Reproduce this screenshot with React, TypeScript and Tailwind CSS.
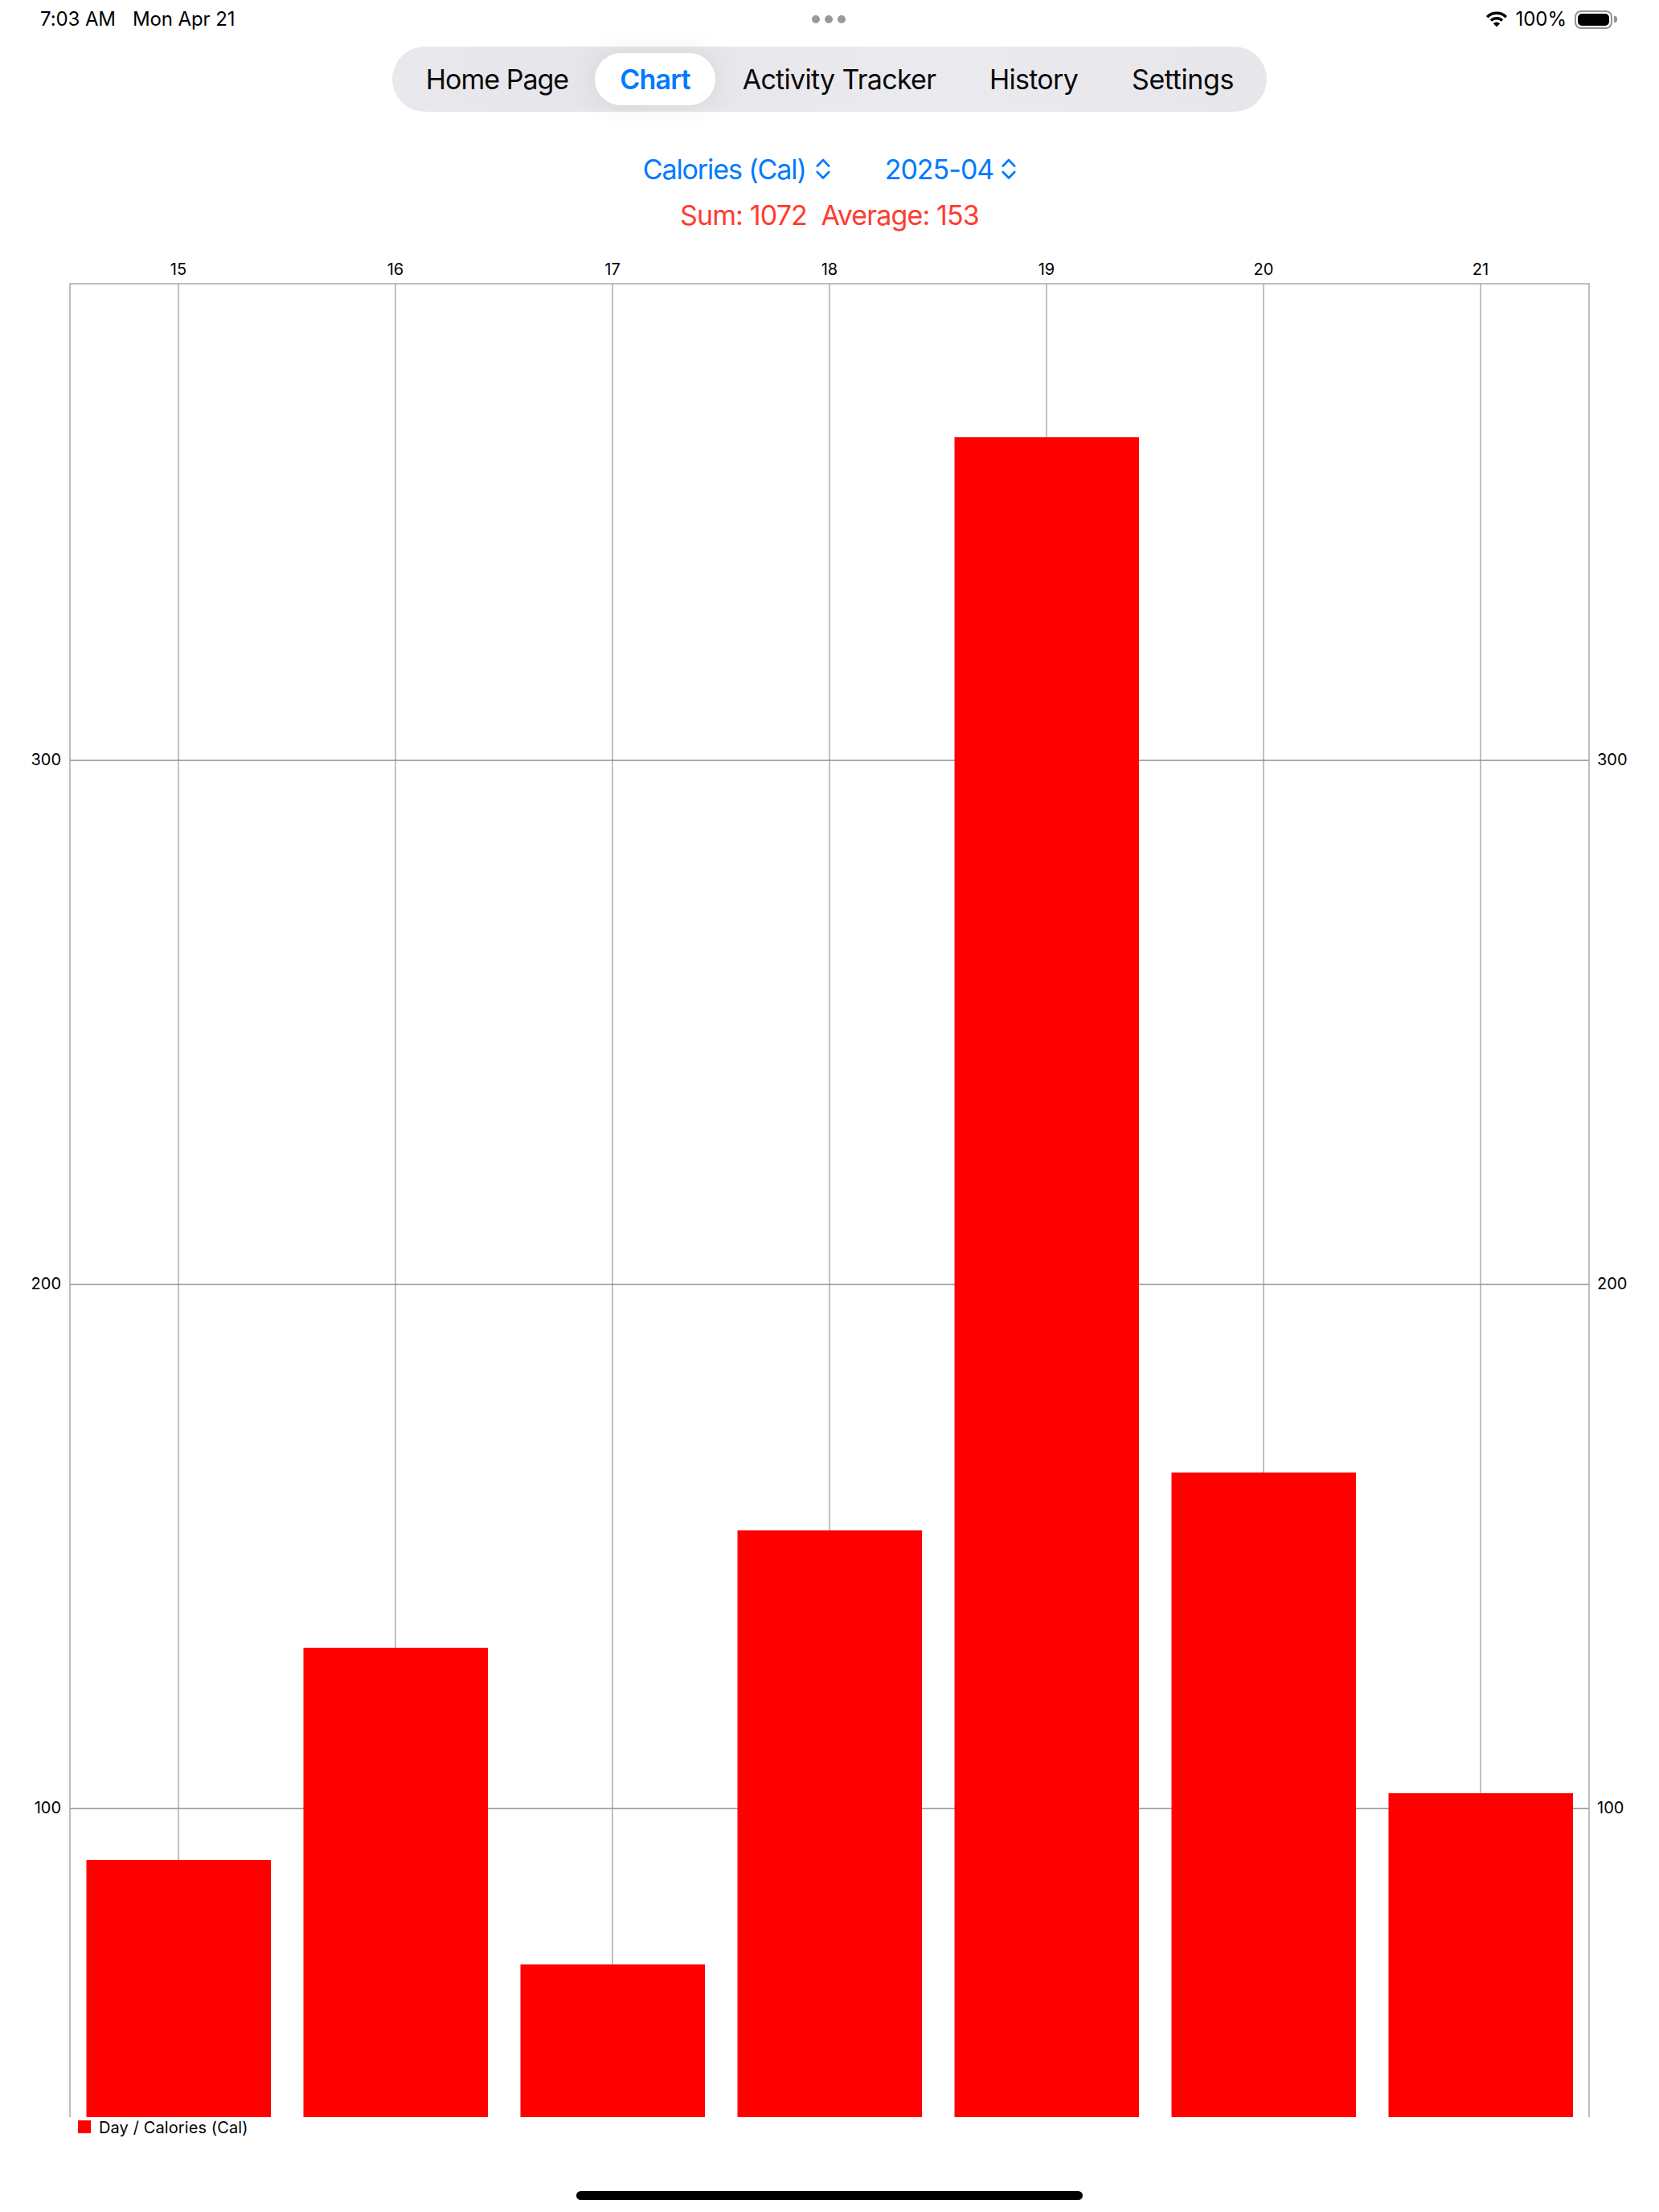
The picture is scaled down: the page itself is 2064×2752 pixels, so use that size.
import React from "react";

const bars = [
  { day: 15, top: 2314 },
  { day: 16, top: 2050 },
  { day: 17, top: 2444 },
  { day: 18, top: 1904 },
  { day: 19, top: 544 },
  { day: 20, top: 1832 },
  { day: 21, top: 2231 },
];
const rows = [
  { label: "300", y: 946 },
  { label: "200", y: 1598 },
  { label: "100", y: 2250 },
];
const OFFSET = 320;
const Y = (v: number) => v - OFFSET;
const LEFT = 87;
const RIGHT = 1977;
const TOP = 353;
const BOTTOM = 2634;
const AXIS = "Inter, 'Liberation Sans', sans-serif";

function Chart() {
  return (
    <svg width={2064} height={2340} viewBox="0 0 2064 2340" className="block">
      {bars.map((b, i) => {
        const cx = 222 + i * 270;
        return (
          <g key={b.day}>
            <line x1={cx} x2={cx} y1={Y(TOP)} y2={Y(BOTTOM)} stroke="#adadad" strokeWidth={1.5} />
            <text x={cx} y={Y(342)} textAnchor="middle" fontSize={20} fontFamily={AXIS} fill="#000">
              {b.day}
            </text>
          </g>
        );
      })}
      {rows.map((r) => (
        <g key={r.label}>
          <line x1={LEFT} x2={RIGHT} y1={Y(r.y)} y2={Y(r.y)} stroke="#8f8f8f" strokeWidth={1.5} />
          <text x={76} y={Y(r.y + 6)} textAnchor="end" fontSize={20} fontFamily={AXIS} fill="#000">
            {r.label}
          </text>
          <text x={1987} y={Y(r.y + 6)} fontSize={20} fontFamily={AXIS} fill="#000">
            {r.label}
          </text>
        </g>
      ))}
      <path
        d={`M${LEFT} ${Y(BOTTOM)} V${Y(TOP)} H${RIGHT} V${Y(BOTTOM)}`}
        fill="none"
        stroke="#a8a8a8"
        strokeWidth={1.5}
      />
      {bars.map((b, i) => (
        <rect key={b.day} x={107.5 + i * 270} y={Y(b.top)} width={229.5} height={BOTTOM - b.top} fill="#ff0000" />
      ))}
      <rect x={97} y={Y(2638)} width={16} height={16} fill="#ff0000" />
      <text x={123} y={Y(2654)} fontSize={20} letterSpacing={0.1} fontFamily={AXIS} fill="#000">
        Day / Calories (Cal)
      </text>
    </svg>
  );
}

function Updown() {
  return (
    <svg width={18} height={26} viewBox="0 0 18 26" fill="none" stroke="#007aff" strokeWidth={2.6} strokeLinecap="round" strokeLinejoin="round">
      <path d="M1.8 9.5 L9 2 L16.2 9.5" />
      <path d="M1.8 17 L9 24.5 L16.2 17" />
    </svg>
  );
}

function Wifi() {
  return (
    <svg width={26} height={20} viewBox="0 0 26 20" fill="none" stroke="#000" strokeWidth={3.4}>
      <path d="M1.2 7.2 A16.6 16.6 0 0 1 24.8 7.2" />
      <path d="M6 11.6 A10 10 0 0 1 20 11.6" />
      <path d="M13 19.6 L8.8 15.2 A6 6 0 0 1 17.2 15.2 Z" fill="#000" stroke="none" />
    </svg>
  );
}

function Battery() {
  return (
    <div className="flex items-center">
      <div className="w-[47px] h-[23px] rounded-[8px] border-2 border-[#949494] p-[2px]">
        <div className="w-full h-full rounded-[5px] bg-black" />
      </div>
      <div className="w-[4px] h-[8px] ml-[2px] rounded-r-[3px] bg-[#949494]" />
    </div>
  );
}

const tabs = [
  { name: "Home Page", w: "w-[243px] tracking-[-1px]", active: false },
  { name: "Chart", w: "w-[150px] tracking-[-0.8px]", active: true },
  { name: "Activity Tracker", w: "w-[308px] tracking-[-0.7px]", active: false },
  { name: "History", w: "w-[176px] tracking-[-0.7px]", active: false },
  { name: "Settings", w: "w-[195px] tracking-[-0.4px]", active: false },
];

export default function App() {
  return (
    <div className="w-[2064px] h-[2752px] bg-white overflow-hidden flex flex-col font-['Inter','Liberation_Sans',sans-serif] text-black">
      <div className="h-[48px] flex items-center justify-between pl-[50px] pr-[52px] text-[24px]">
        <div className="flex gap-[21px] w-[600px] tracking-[-0.1px]">
          <span>7:03 AM</span>
          <span>Mon Apr 21</span>
        </div>
        <div className="flex gap-[6px]">
          <div className="w-[10px] h-[10px] rounded-full bg-[#999999]" />
          <div className="w-[10px] h-[10px] rounded-full bg-[#999999]" />
          <div className="w-[10px] h-[10px] rounded-full bg-[#999999]" />
        </div>
        <div className="w-[600px] flex items-center justify-end gap-[10px]">
          <Wifi />
          <span>100%</span>
          <Battery />
        </div>
      </div>

      <div className="mt-[10px] self-center h-[81px] w-[1088px] pl-[9px] rounded-[41px] flex items-center bg-[linear-gradient(90deg,#e9e9ed_0%,#e6e6ea_25%,#ebebef_60%,#e7e7eb_100%)]">
        {tabs.map((t) => (
          <div
            key={t.name}
            className={`${t.w} h-[65px] flex items-center justify-center rounded-[33px] text-[34px] ${
              t.active ? "bg-white text-[#007aff] font-semibold shadow-[0_0_36px_rgba(0,0,0,0.08)]" : "text-[#0a0a0a]"
            }`}
          >
            {t.name}
          </div>
        ))}
      </div>

      <div className="mt-[49px] h-[44px] flex items-center justify-center text-[34px] text-[#007aff]">
        <div className="flex items-center gap-[12px]">
          <span className="tracking-[-1.1px]">Calories (Cal)</span>
          <Updown />
        </div>
        <div className="flex items-center gap-[10px] ml-[68px]">
          <span className="tracking-[-1px]">2025-04</span>
          <Updown />
        </div>
      </div>

      <div className="mt-[13px] h-[44px] flex items-center justify-center text-[34px] tracking-[-0.85px] text-[#ff3b30] whitespace-pre">
        Sum: 1072  Average: 153
      </div>

      <div className="mt-[31px]">
        <Chart />
      </div>

      <div className="mt-[66px] self-center w-[630px] h-[11px] rounded-full bg-black" />
    </div>
  );
}
